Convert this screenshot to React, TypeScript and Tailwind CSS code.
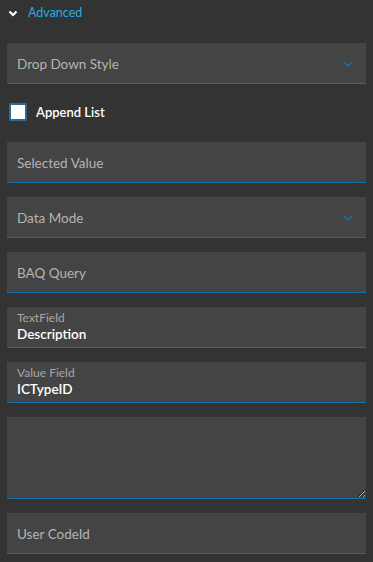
const font = { fontFamily: '"Lato", "Noto Sans", sans-serif' };

function Chevron() {
  return (
    <svg width="10" height="6" viewBox="0 0 10 6" className="shrink-0">
      <path d="M1 1l4 4 4-4" fill="none" stroke="#1b6ea6" strokeWidth="1.6" />
    </svg>
  );
}

function Field({ label, dropdown }: { label: string; dropdown?: boolean }) {
  return (
    <div className="h-[41px] bg-[#444444] border-b border-[#1270ad] flex items-center justify-between pl-[10px] pr-[13px] pt-[2px]">
      <span className="text-[13.5px] text-[#b4b4b4]">{label}</span>
      {dropdown && <Chevron />}
    </div>
  );
}

function ValueField({ label, value }: { label: string; value: string }) {
  return (
    <div className="h-[41px] bg-[#444444] border-b border-[#1270ad] flex flex-col justify-center pl-[10px] leading-none">
      <span className="text-[12px] text-[#a8a8a8] mb-[4px]">{label}</span>
      <span className="text-[13.5px] text-white font-semibold">{value}</span>
    </div>
  );
}

export default function App() {
  return (
    <div className="w-[373px] h-[562px] bg-[#333333] px-[7px] overflow-hidden" style={font}>
      <div className="h-[27px] flex items-center gap-[10px] pl-[1px]">
        <svg width="10" height="7" viewBox="0 0 10 7">
          <path d="M1.5 1.5l3.5 3.5 3.5-3.5" fill="none" stroke="#ffffff" strokeWidth="2.2" />
        </svg>
        <span className="text-[12.5px] text-[#1eaee6]">Advanced</span>
      </div>

      <div className="mt-[16px]">
        <Field label="Drop Down Style" dropdown />
      </div>

      <div className="h-[58px] flex items-center gap-[9px] pl-[2px] pb-[2px]">
        <div className="w-[18px] h-[18px] bg-white border-2 border-[#2a6a96] rounded-[1px]" />
        <span className="text-[13px] leading-none text-white font-semibold">Append List</span>
      </div>

      <div className="flex flex-col gap-[14px]">
        <Field label="Selected Value" />
        <Field label="Data Mode" dropdown />
        <Field label="BAQ Query" />
        <ValueField label="TextField" value="Description" />
        <ValueField label="Value Field" value="ICTypeID" />
        <textarea
          className="h-[82px] bg-[#444444] border-0 border-b border-[#1270ad] resize-y outline-none [color-scheme:dark] text-white text-[14px] p-[10px] block w-full"
        />
        <Field label="User CodeId" />
      </div>
    </div>
  );
}
